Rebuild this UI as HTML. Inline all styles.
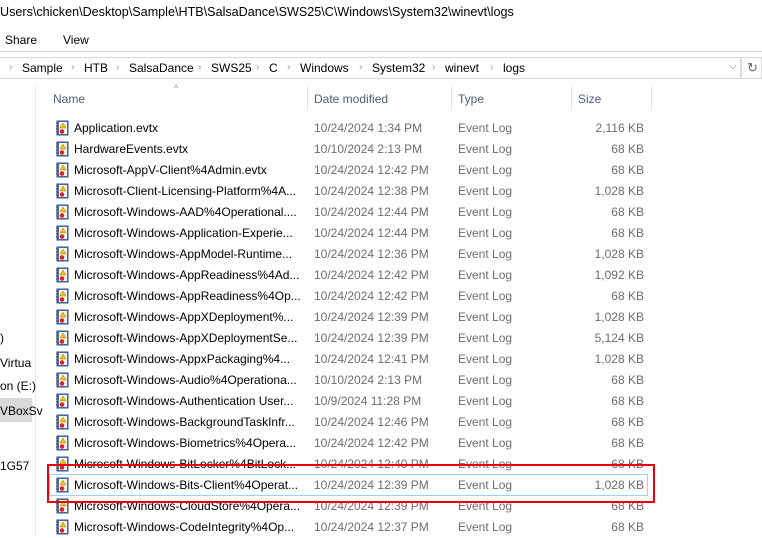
<!DOCTYPE html>
<html><head><style>
*{margin:0;padding:0;box-sizing:border-box}
body{width:762px;height:536px;background:#fff;font-family:"Liberation Sans",sans-serif;font-size:12px;color:#000;position:relative;overflow:hidden}
.a{position:absolute;white-space:nowrap}
.row{position:absolute;left:0;height:21px;width:762px}
.row .n{position:absolute;left:74px;top:3px}
.row .d{position:absolute;left:314px;top:3px;color:#6d6d6d}
.row .t{position:absolute;left:458px;top:3px;color:#6d6d6d}
.row .s{position:absolute;right:118px;top:3px;color:#6d6d6d}
.ic{position:absolute;left:55px;top:2px;width:14px;height:16px}
.bc{position:absolute;top:61px;font-size:12px;white-space:nowrap}
.sp{position:absolute;top:62px;color:#999;font-size:10px}
</style></head><body>
<div class="a" style="left:0;top:5px;font-size:12.6px;">Users\chicken\Desktop\Sample\HTB\SalsaDance\SWS25\C\Windows\System32\winevt\logs</div>
<div class="a" style="left:5px;top:33px;">Share</div>
<div class="a" style="left:63px;top:33px;">View</div>
<div class="a" style="left:0;top:51px;width:762px;height:1px;background:#d9d9d9"></div>
<div class="a" style="left:0;top:57px;width:741px;height:22px;border:1px solid #d9d9d9;border-left:none"></div>
<div class="a" style="left:741px;top:57px;width:21px;height:22px;border:1px solid #d9d9d9"></div>
<span class="sp" style="left:9px">›</span><span class="bc" style="left:22px">Sample</span>
<span class="sp" style="left:71px">›</span><span class="bc" style="left:84px">HTB</span>
<span class="sp" style="left:116px">›</span><span class="bc" style="left:129px">SalsaDance</span>
<span class="sp" style="left:198px">›</span><span class="bc" style="left:211px">SWS25</span>
<span class="sp" style="left:256px">›</span><span class="bc" style="left:269px">C</span>
<span class="sp" style="left:287px">›</span><span class="bc" style="left:300px">Windows</span>
<span class="sp" style="left:359px">›</span><span class="bc" style="left:372px">System32</span>
<span class="sp" style="left:432px">›</span><span class="bc" style="left:445px">winevt</span>
<span class="sp" style="left:490px">›</span><span class="bc" style="left:503px">logs</span>
<div class="a" style="left:729px;top:61px;color:#666;font-size:10px">⌵</div>
<div class="a" style="left:747px;top:60px;color:#666;font-size:13px">↻</div>
<div class="a" style="left:35px;top:86px;width:1px;height:450px;background:#eaeaea"></div>
<div class="a" style="left:174px;top:83px;color:#888;font-size:9px">^</div>
<div class="a" style="left:53px;top:92px;color:#4c607a">Name</div>
<div class="a" style="left:314px;top:92px;color:#4c607a">Date modified</div>
<div class="a" style="left:458px;top:92px;color:#4c607a">Type</div>
<div class="a" style="left:578px;top:92px;color:#4c607a">Size</div>
<div class="a" style="left:307px;top:86px;width:1px;height:24px;background:#e5e5e5"></div>
<div class="a" style="left:451px;top:86px;width:1px;height:24px;background:#e5e5e5"></div>
<div class="a" style="left:571px;top:86px;width:1px;height:24px;background:#e5e5e5"></div>
<div class="a" style="left:651px;top:86px;width:1px;height:24px;background:#e5e5e5"></div>
<div class="a" style="left:0;top:331px">)</div>
<div class="a" style="left:0;top:356px">Virtua</div>
<div class="a" style="left:0;top:379px">on (E:)</div>
<div class="a" style="left:0;top:398px;width:32px;height:24px;background:#d9d9d9"></div>
<div class="a" style="left:0;top:404px">VBoxSv</div>
<div class="a" style="left:0;top:459px">1G57</div>
<div class="a" style="left:49px;top:474px;width:599px;height:22px;border:1px solid #99d1ff;background:#fff"></div>
<div id="rows"></div>
<div class="a" style="left:47px;top:464px;width:608px;height:39px;border:2px solid #e8000b"></div>
<script>
var r=[["Application.evtx","10/24/2024 1:34 PM","2,116 KB"],["HardwareEvents.evtx","10/10/2024 2:13 PM","68 KB"],["Microsoft-AppV-Client%4Admin.evtx","10/24/2024 12:42 PM","68 KB"],["Microsoft-Client-Licensing-Platform%4A...","10/24/2024 12:38 PM","1,028 KB"],["Microsoft-Windows-AAD%4Operational....","10/24/2024 12:44 PM","68 KB"],["Microsoft-Windows-Application-Experie...","10/24/2024 12:44 PM","68 KB"],["Microsoft-Windows-AppModel-Runtime...","10/24/2024 12:36 PM","1,028 KB"],["Microsoft-Windows-AppReadiness%4Ad...","10/24/2024 12:42 PM","1,092 KB"],["Microsoft-Windows-AppReadiness%4Op...","10/24/2024 12:42 PM","68 KB"],["Microsoft-Windows-AppXDeployment%...","10/24/2024 12:39 PM","1,028 KB"],["Microsoft-Windows-AppXDeploymentSe...","10/24/2024 12:39 PM","5,124 KB"],["Microsoft-Windows-AppxPackaging%4...","10/24/2024 12:41 PM","1,028 KB"],["Microsoft-Windows-Audio%4Operationa...","10/10/2024 2:13 PM","68 KB"],["Microsoft-Windows-Authentication User...","10/9/2024 11:28 PM","68 KB"],["Microsoft-Windows-BackgroundTaskInfr...","10/24/2024 12:46 PM","68 KB"],["Microsoft-Windows-Biometrics%4Opera...","10/24/2024 12:42 PM","68 KB"],["Microsoft-Windows-BitLocker%4BitLock...","10/24/2024 12:40 PM","68 KB"],["Microsoft-Windows-Bits-Client%4Operat...","10/24/2024 12:39 PM","1,028 KB"],["Microsoft-Windows-CloudStore%4Opera...","10/24/2024 12:39 PM","68 KB"],["Microsoft-Windows-CodeIntegrity%4Op...","10/24/2024 12:37 PM","68 KB"]];
var ic='<svg class="ic" viewBox="0 0 14 16"><rect x="2" y="1" width="11" height="14" fill="#5a7fc0" stroke="#2d4f8f"/><rect x="4" y="2" width="8" height="12" fill="#f4f4f4"/><path d="M1 3h3M1 6h3M1 9h3M1 12h3" stroke="#555"/><path d="M8 3l3 5H5z" fill="#f5c400" stroke="#a07b00" stroke-width=".5"/><circle cx="7" cy="11.5" r="2.3" fill="#d5262b"/></svg>';
var h='';r.forEach(function(x,i){h+='<div class="row" style="top:'+(118+i*21)+'px">'+ic+'<span class="n">'+x[0]+'</span><span class="d">'+x[1]+'</span><span class="t">Event Log</span><span class="s">'+x[2]+'</span></div>'});
document.getElementById('rows').innerHTML=h;
</script>
</body></html>
